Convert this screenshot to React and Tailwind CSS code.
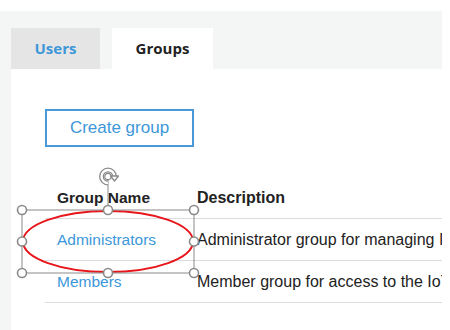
export default function App() {
  return (
    <div className="relative w-[450px] h-[330px] bg-white overflow-hidden font-['Liberation_Sans',Arial,sans-serif]">
      <div className="mt-[11px] w-[442px] h-[319px] bg-[#f4f5f5] pl-[11px] pt-[17px] flex flex-col">
        <div className="flex gap-[12px] h-[41px] shrink-0 font-['Open_Sans',sans-serif] font-bold text-[15px]">
          <div className="w-[89px] bg-[#e6e5e5] flex items-center justify-center text-[#3d97d9]">Users</div>
          <div className="w-[101px] bg-white flex items-center justify-center text-[#222]">Groups</div>
        </div>
        <div className="flex-1 bg-white pl-[34px] pt-[40px]">
          <div className="w-[149px] h-[38px] border-2 border-[#4a9ad8] flex items-center justify-center text-[#3d97d9] text-[17px]">
            Create group
          </div>
          <div className="mt-[30px]">
            <div className="grid grid-cols-[152px_1fr] h-[42px] border-b border-[#dcdcdc] items-center font-bold text-[#222]">
              <div className="pl-[12px] text-[15.5px]">Group Name</div>
              <div className="whitespace-nowrap overflow-hidden text-[16px]">Description</div>
            </div>
            <div className="grid grid-cols-[152px_1fr] h-[42px] border-b border-[#dcdcdc] items-center">
              <div className="pl-[12px] text-[#3d97d9] text-[15.5px]">Administrators</div>
              <div className="whitespace-nowrap overflow-hidden text-[#222] text-[16px]">Administrator group for managing IoT devices</div>
            </div>
            <div className="grid grid-cols-[152px_1fr] h-[42px] border-b border-[#dcdcdc] items-center">
              <div className="pl-[12px] text-[#3d97d9] text-[15.5px]">Members</div>
              <div className="whitespace-nowrap overflow-hidden text-[#222] text-[16px]">Member group for access to the IoT devices</div>
            </div>
          </div>
        </div>
      </div>
      <svg className="absolute left-0 top-0" width="450" height="330" viewBox="0 0 450 330">
        <ellipse cx="108" cy="241.5" rx="85" ry="30.5" fill="none" stroke="#e8161b" strokeWidth="2" />
        <rect x="22" y="210" width="172" height="63" fill="none" stroke="#8a8a8a" strokeWidth="1" />
        <line x1="108" y1="180" x2="108" y2="210" stroke="#8a8a8a" strokeWidth="1" />
        <g fill="none">
          <path d="M108 183 A6.5 6.5 0 1 1 114.5 176.5" stroke="#8a8a8a" strokeWidth="5" />
          <path d="M108 183 A6.5 6.5 0 1 1 114.5 176.5" stroke="#ffffff" strokeWidth="2.4" />
          <path d="M110.5 176 L118.5 176 L114.5 181 Z" fill="#fff" stroke="#8a8a8a" strokeWidth="1.3" strokeLinejoin="round" />
          <circle cx="108" cy="176.5" r="3.2" stroke="#8a8a8a" strokeWidth="1.2" />
        </g>
        {[[22, 210], [108, 210], [194, 210], [22, 241.5], [194, 241.5], [22, 273], [108, 273], [194, 273]].map(([x, y], i) => (
          <circle key={i} cx={x} cy={y} r="4.5" fill="#fff" stroke="#8a8a8a" strokeWidth="1.6" />
        ))}
      </svg>
    </div>
  );
}
